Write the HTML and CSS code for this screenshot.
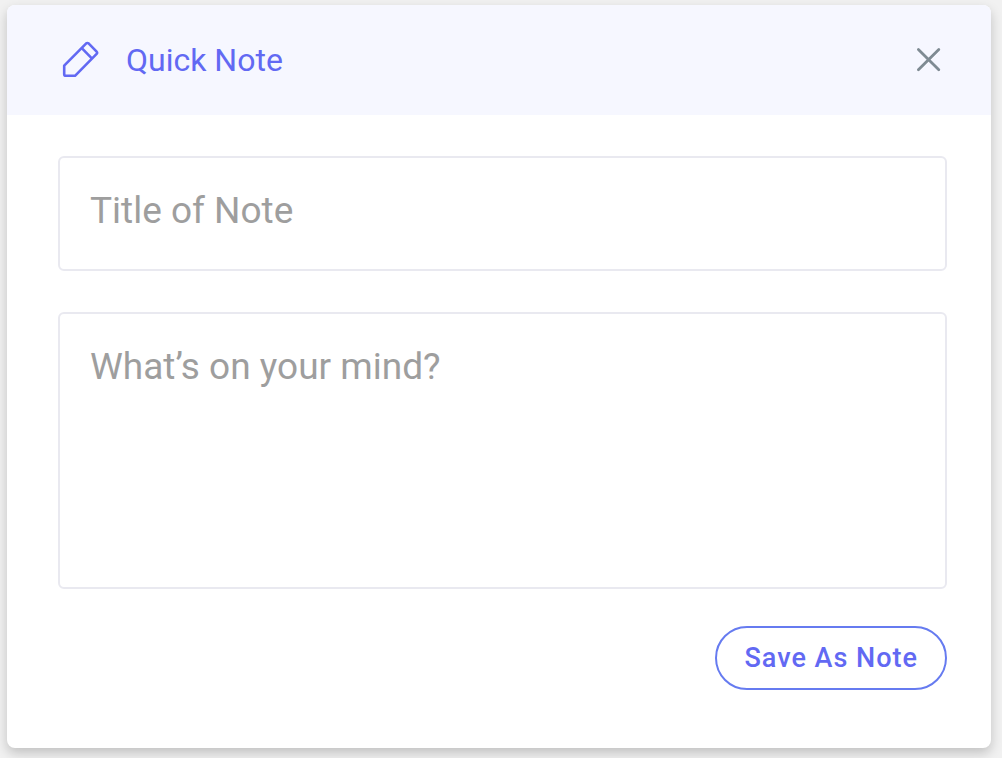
FILE: index.html
```html
<!DOCTYPE html>
<html lang="en">
<head>
    <meta charset="UTF-8">
    <meta name="viewport" content="width=device-width, initial-scale=1.0">
    <title>Quick Note</title>
    <link rel="stylesheet" href="styles.css">
</head>
<body>
    <main class="note-card">
        <header class="note-header">
            <svg class="pencil-icon" width="38" height="38" viewBox="0 0 38 38" aria-hidden="true">
                <path d="M2.2 24.6 L24 2.6 Q25.4 1.4 26.8 2.6 L34.4 10.4 Q35.8 11.8 34.4 13.2 L13 34.8 H4 Q2.2 34.8 2.2 33.2 Z"/>
                <path d="M19.8 7.2 L29.8 17.4"/>
            </svg>
            <h1>Quick Note</h1>
            <button class="close-btn" type="button" aria-label="Close">
                <svg width="26" height="26" viewBox="0 0 26 26" aria-hidden="true">
                    <path d="M2.4 2.4 L22.8 22.8 M22.8 2.4 L2.4 22.8"/>
                </svg>
            </button>
        </header>
        <form class="note-form">
            <input class="note-field note-title" type="text" placeholder="Title of Note" aria-label="Title of Note">
            <textarea class="note-field note-text" placeholder="What’s on your mind?" aria-label="What’s on your mind?"></textarea>
            <button class="save-btn" type="button">Save As Note</button>
        </form>
    </main>
</body>
</html>
```

FILE: styles.css
```css
*,::after,::before{
    padding: 0;
    margin: 0;
    box-sizing: border-box;
}

body{
    font-family: Roboto, sans-serif;
    background-color: #f1f1f1;
    padding: 5px 11px 10px 7px;
}

button{
    font-family: inherit;
    background: none;
    border: none;
    cursor: pointer;
}

.note-card{
    background-color: #fff;
    border-radius: 8px;
    box-shadow: 0 5px 12px rgba(0, 0, 0, 0.2);
    overflow: hidden;
}

.note-header{
    display: flex;
    align-items: center;
    padding: 36px 49px 36px 55px;
    background-color: #f6f7ff;
}

.note-header h1{
    flex: 1;
    margin-left: 26px;
    font-size: 32px;
    font-weight: 400;
    line-height: 38px;
    color: #6269f3;
}

.pencil-icon{
    fill: none;
    stroke: #6269f3;
    stroke-width: 2.6;
    stroke-linejoin: round;
}

.close-btn{
    display: flex;
}

.close-btn svg{
    fill: none;
    stroke: #7f8b93;
    stroke-width: 2.8;
    stroke-linecap: round;
}

.note-form{
    display: flex;
    flex-direction: column;
    padding: 41px 44px 58px 51px;
}

.note-field{
    width: 100%;
    border: 2px solid #e9e9f0;
    border-radius: 6px;
    font-family: inherit;
    font-size: 37px;
    line-height: 44px;
    color: #333;
    background-color: #fff;
}

.note-field::placeholder{
    color: #9e9e9e;
    opacity: 1;
}

.note-title{
    padding: 31px 30px 36px;
    margin-bottom: 41px;
}

.note-text{
    display: block;
    height: 277px;
    padding: 31px 30px;
    margin-bottom: 37px;
    resize: none;
}

.save-btn{
    align-self: flex-end;
    padding: 14px 27px;
    border: 2px solid #667bf0;
    border-radius: 32px;
    font-size: 27px;
    font-weight: 500;
    line-height: 32px;
    letter-spacing: 1px;
    color: #6269f3;
}
```
